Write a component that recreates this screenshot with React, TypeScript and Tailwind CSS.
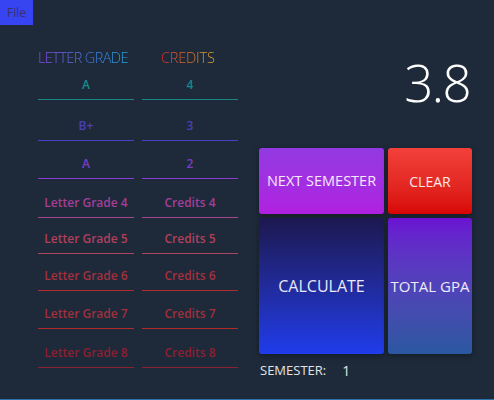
import React from "react";

const rows = [
  { g: "A", c: "4", text: "text-[#148a8a]", border: "border-[#1a8585]", h: "h-[30px]" },
  { g: "B+", c: "3", text: "text-[#4b3fb5]", border: "border-[#4a40c8]", h: "h-[41px]" },
  { g: "A", c: "2", text: "text-[#7a3cc4]", border: "border-[#8a3cd0]", h: "h-[38px]" },
  { g: "Letter Grade 4", c: "Credits 4", text: "text-[#a43f98]", border: "border-[#a34890]", h: "h-[39px]" },
  { g: "Letter Grade 5", c: "Credits 5", text: "text-[#b0405c]", border: "border-[#a8475f]", h: "h-[36px]" },
  { g: "Letter Grade 6", c: "Credits 6", text: "text-[#a4303e]", border: "border-[#b02a30]", h: "h-[37px]" },
  { g: "Letter Grade 7", c: "Credits 7", text: "text-[#a0303c]", border: "border-[#b02a2c]", h: "h-[38px]" },
  { g: "Letter Grade 8", c: "Credits 8", text: "text-[#8c1f30]", border: "border-[#8a2232]", h: "h-[39px]" },
];

export default function App() {
  return (
    <div
      className="w-[494px] h-[400px] bg-[#1e2a3a] flex flex-col border-b border-[#2a72aa] overflow-hidden"
      style={{ fontFamily: "'Open Sans', 'Noto Sans', sans-serif" }}
    >
      <div className="w-[33px] h-[25px] bg-[#3644f2] text-[#3a3070] text-[12px] flex items-center justify-center">
        File
      </div>
      <div className="flex flex-row">
        <div className="pl-[38px] w-[238px] flex flex-col">
          <div className="flex flex-row mt-[24px] h-[18px] items-center text-[14.5px] font-light leading-none">
            <div className="w-[100px] bg-gradient-to-r from-[#8a44e8] via-[#3f78e2] to-[#14b4e4] bg-clip-text text-transparent whitespace-nowrap tracking-[-0.6px]">
              LETTER GRADE
            </div>
            <div className="ml-[23px] w-[60px] bg-gradient-to-r from-[#e42a30] via-[#e07224] to-[#e8c232] bg-clip-text text-transparent whitespace-nowrap tracking-[-0.2px]">
              CREDITS
            </div>
          </div>
          <div className="flex flex-col mt-[3px]">
            {rows.map((r, i) => (
              <div key={i} className={`flex flex-row gap-[8px] ${r.h}`}>
                <div className={`w-[96px] border-b ${r.border} flex items-end justify-center pb-[6px]`}>
                  <span className={`text-[12px] font-semibold leading-[16px] ${r.text} whitespace-nowrap`}>{r.g}</span>
                </div>
                <div className={`w-[96px] border-b ${r.border} flex items-end justify-center pb-[6px]`}>
                  <span className={`text-[12px] font-semibold leading-[16px] ${r.text} whitespace-nowrap`}>{r.c}</span>
                </div>
              </div>
            ))}
          </div>
        </div>
        <div className="ml-[21px] flex flex-col w-[213px]">
          <div className="h-[123px] flex items-start justify-end pr-[2px] pt-[32px]">
            <span className="text-[51px] font-light text-white leading-none tracking-[-1.5px]">3.8</span>
          </div>
          <div className="grid grid-cols-[125px_84px] grid-rows-[66px_136px] gap-[4px]">
            <div className="rounded-[3px] bg-gradient-to-b from-[#9239e2] to-[#b020e0] shadow-[0_2px_6px_rgba(0,0,0,0.35)] flex items-center justify-center text-[14.5px] text-white/90 whitespace-nowrap">
              NEXT SEMESTER
            </div>
            <div className="rounded-[3px] bg-gradient-to-b from-[#f2403a] to-[#d80404] shadow-[0_2px_6px_rgba(0,0,0,0.35)] flex items-center justify-center text-[14px] text-white/90">
              CLEAR
            </div>
            <div className="rounded-[3px] bg-gradient-to-b from-[#1c1850] to-[#1f3cec] shadow-[0_2px_6px_rgba(0,0,0,0.35)] flex items-center justify-center text-[16px] text-white/90">
              CALCULATE
            </div>
            <div className="rounded-[3px] bg-gradient-to-b from-[#6a12d2] to-[#2a58a0] shadow-[0_2px_6px_rgba(0,0,0,0.35)] flex items-center justify-center text-[15px] text-white/90 whitespace-nowrap">
              TOTAL GPA
            </div>
          </div>
          <div className="flex flex-row items-center mt-[6px] text-[13px] text-[#e4e4e4] pl-[1px]">
            <span>SEMESTER:</span>
            <span className="ml-[16px] text-[14px]">1</span>
          </div>
        </div>
      </div>
    </div>
  );
}
